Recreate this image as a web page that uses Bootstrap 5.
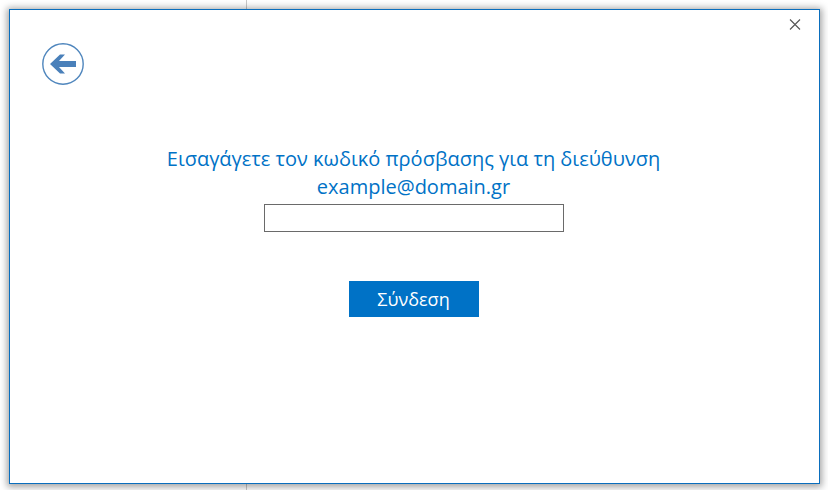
<!DOCTYPE html>
<html lang="el">
<head>
    <meta charset="UTF-8">
    <meta name="viewport" content="width=device-width, initial-scale=1.0">
    <title>Σύνδεση</title>
    <link href="https://cdn.jsdelivr.net/npm/bootstrap@5.3.0/dist/css/bootstrap.min.css" rel="stylesheet">
    <style>
        html, body { height: 100%; }
        body {
            margin: 0;
            overflow: hidden;
            padding: 9px 8px 5px 9px;
            font-family: "Open Sans", "Noto Sans", sans-serif;
            background: linear-gradient(#c9c9c9, #c9c9c9) 246px 0 / 1px 100% no-repeat, #fff;
        }
        .signin-window {
            height: 475px;
            background: #fff;
            border: 1px solid #0a6ebd;
            box-shadow: 0 1px 7px 2px rgba(0, 0, 0, .36);
        }
        .close-row { height: 33px; padding: 8px 18px 0 0; }
        .close-btn { width: 13px; height: 13px; display: block; }
        .back-row { height: 42px; padding-left: 32px; }
        .back-btn { width: 42px; height: 42px; display: block; }
        .form-col { padding-right: 2px; }
        .prompt {
            margin: 60px 0 3px;
            color: #0072c6;
            font-size: 20px;
            line-height: 28px;
            font-weight: 400;
        }
        .pass-input {
            width: 300px;
            height: 28px;
            border: 1px solid #6a6a6a;
            border-radius: 0;
            padding: 2px 4px;
        }
        .signin-btn {
            width: 130px;
            height: 36px;
            margin-top: 49px;
            padding: 0;
            font-size: 18px;
            color: #fff;
            background: #0072c6;
            border: 0;
            border-radius: 0;
        }
    </style>
</head>
<body>
    <div class="signin-window">
        <div class="close-row d-flex justify-content-end">
            <svg class="close-btn" viewBox="0 0 13 13" fill="none" stroke="#555" stroke-width="1.1">
                <path d="M2 1.5l10 10M12 1.5l-10 10"/>
            </svg>
        </div>
        <div class="back-row">
            <svg class="back-btn" viewBox="0 0 42 42">
                <circle cx="21" cy="21" r="20.2" fill="#fff" stroke="#4f86bd" stroke-width="1.4"/>
                <path d="M8 21l10-9.500h5l-6 6.500h17v6h-17l6 6.500h-5z" fill="#4a80ba"/>
            </svg>
        </div>
        <div class="form-col d-flex flex-column align-items-center text-center">
            <h1 class="prompt">Εισαγάγετε τον κωδικό πρόσβασης για τη διεύθυνση<br>example@domain.gr</h1>
            <input class="pass-input" type="password" aria-label="Κωδικός πρόσβασης">
            <button class="btn signin-btn" type="button">Σύνδεση</button>
        </div>
    </div>
    <script src="https://cdn.jsdelivr.net/npm/bootstrap@5.3.0/dist/js/bootstrap.bundle.min.js"></script>
</body>
</html>
